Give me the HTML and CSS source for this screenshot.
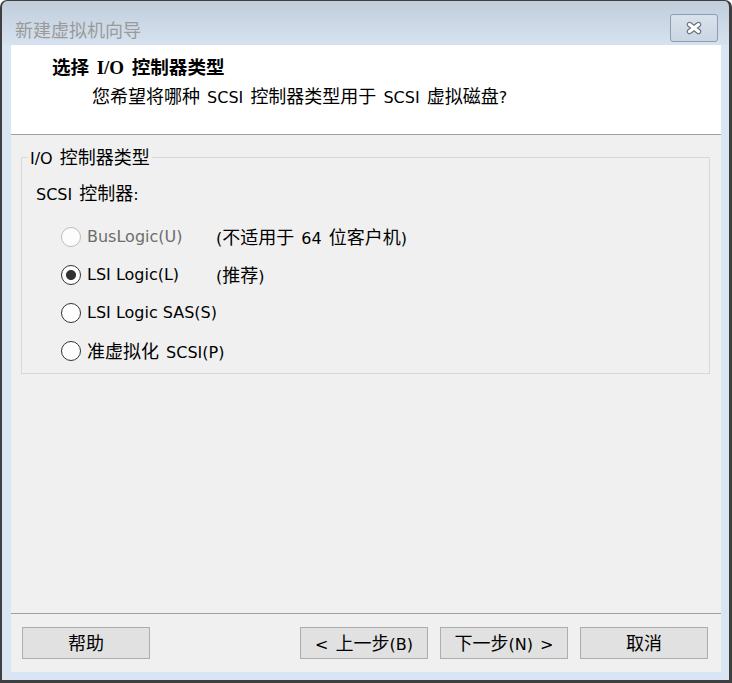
FILE: index.html
```html
<!DOCTYPE html>
<html lang="zh-CN">
<head>
<meta charset="utf-8">
<title>新建虚拟机向导</title>
<link rel="stylesheet" href="styles.css">
</head>
<body>
<div class="window">
  <div class="titlebar">
    <span class="window-title">新建虚拟机向导</span>
    <button class="close-btn" aria-label="关闭">
      <svg width="18" height="14" viewBox="0 0 18 14">
        <path d="M4.5 3.5 L13.5 10.5 M13.5 3.5 L4.5 10.5" stroke="#66717d" stroke-width="5.4" stroke-linecap="round" fill="none"/>
        <path d="M4.5 3.5 L13.5 10.5 M13.5 3.5 L4.5 10.5" stroke="#ffffff" stroke-width="3.2" stroke-linecap="round" fill="none"/>
      </svg>
    </button>
  </div>
  <div class="client">
    <header class="wizard-header">
      <h1 class="step-title"><span class="zh">选择</span> <span class="serif">I/O</span> <span class="zh">控制器类型</span></h1>
      <p class="step-desc"><span class="zh">您希望将哪种</span> SCSI <span class="zh">控制器类型用于</span> SCSI <span class="zh">虚拟磁盘</span>?</p>
    </header>
    <main class="wizard-body">
      <fieldset class="group">
        <legend class="group-legend">I/O <span class="zh">控制器类型</span></legend>
        <div class="group-inner">
          <div class="caption">SCSI <span class="zh">控制器</span>:</div>
          <div class="options">
            <label class="option disabled">
              <input type="radio" name="scsi" class="radio" disabled>
              <span class="opt-label latin">BusLogic(U)</span>
              <span class="opt-note">(<span class="zh">不适用于</span> 64 <span class="zh">位客户机</span>)</span>
            </label>
            <label class="option">
              <input type="radio" name="scsi" class="radio" checked>
              <span class="opt-label latin">LSI Logic(L)</span>
              <span class="opt-note">(<span class="zh">推荐</span>)</span>
            </label>
            <label class="option">
              <input type="radio" name="scsi" class="radio">
              <span class="opt-label latin">LSI Logic SAS(S)</span>
              <span class="opt-note"></span>
            </label>
            <label class="option">
              <input type="radio" name="scsi" class="radio">
              <span class="opt-label"><span class="zh">准虚拟化</span> SCSI(P)</span>
              <span class="opt-note"></span>
            </label>
          </div>
        </div>
      </fieldset>
    </main>
    <footer class="wizard-footer">
      <button class="btn"><span class="zh">帮助</span></button>
      <button class="btn btn-back">&lt; <span class="zh">上一步</span>(B)</button>
      <button class="btn"><span class="zh">下一步</span>(N) &gt;</button>
      <button class="btn"><span class="zh">取消</span></button>
    </footer>
  </div>
</div>
</body>
</html>
```

FILE: styles.css
```css
* {
  box-sizing: border-box;
}

html,
body {
  margin: 0;
  padding: 0;
}

body {
  width: 732px;
  height: 683px;
  overflow: hidden;
  background: #ffffff;
  color: #000000;
  font-family: "DejaVu Sans", "Noto Sans CJK SC", sans-serif;
  font-size: 16px;
  word-spacing: 2px;
}

.zh {
  font-family: "Noto Sans CJK SC", sans-serif;
  font-size: 18px;
}

.latin {
  word-spacing: 0;
}

.window {
  width: 732px;
  height: 683px;
  display: flex;
  flex-direction: column;
  border-style: solid;
  border-color: #3f3f3f;
  border-width: 1px 3px 3px 2px;
  border-radius: 7px 7px 0 0;
  padding: 0 8px 8px 9px;
  background: linear-gradient(#c1cddb 0, #d6e2ef 44px, #d9e5f2 44px, #d9e5f2 100%);
}

.titlebar {
  height: 44px;
  display: flex;
  align-items: center;
  justify-content: space-between;
  padding: 11px 3px 0 4px;
}

.window-title {
  font-family: "Noto Sans CJK SC", sans-serif;
  font-size: 18px;
  line-height: 24px;
  color: #9a9a9a;
  padding-top: 1px;
}

.close-btn {
  width: 48px;
  height: 28px;
  padding: 0;
  margin-top: -1px;
  border: 1px solid #8d9cb1;
  border-radius: 3px;
  background: linear-gradient(#d9e2ec, #cad6e3);
  display: flex;
  align-items: center;
  justify-content: center;
}

.client {
  flex: 1;
  display: flex;
  flex-direction: column;
  background: #f0f0f0;
}

.wizard-header {
  height: 90px;
  flex: none;
  background: #ffffff;
  border-bottom: 1px solid #a0a0a0;
  padding: 9px 0 0 41px;
}

.step-title {
  margin: 0;
  font-size: 18.6px;
  line-height: 24px;
  font-weight: 700;
  word-spacing: 1px;
}

.step-title .zh {
  font-size: 18.6px;
}

.serif {
  font-family: "Liberation Serif", serif;
  font-size: 19px;
}

.step-desc {
  margin: 3px 0 0 40px;
  line-height: 24px;
}

.wizard-body {
  flex: 1;
  padding-top: 11px;
}

.group {
  margin: 0 11px 0 10px;
  padding: 0 6px 3px;
  border: 1px solid #d9d9d9;
  min-width: 0;
}

.group-legend {
  padding: 0 2px;
  line-height: 20px;
}

.group-inner {
  padding-left: 8px;
}

.caption {
  margin-top: 13px;
  line-height: 20px;
}

.options {
  margin-top: 13px;
}

.option {
  display: grid;
  grid-template-columns: 20px 123px auto;
  column-gap: 6px;
  align-items: center;
  height: 38px;
  padding-left: 25px;
  line-height: 20px;
}

.radio {
  appearance: none;
  -webkit-appearance: none;
  margin: 0;
  width: 20px;
  height: 20px;
  border: 1px solid #333333;
  border-radius: 50%;
  background: #ffffff;
}

.radio:checked {
  background: radial-gradient(circle, #333333 0, #333333 4.6px, #ffffff 5.4px);
}

.radio:disabled {
  border-color: #bcbcbc;
  background: #fcfcfc;
}

.option.disabled .opt-label {
  color: #6d6d6d;
}

.opt-label,
.opt-note {
  white-space: nowrap;
}

.wizard-footer {
  flex: none;
  display: flex;
  gap: 12px;
  border-top: 1px solid #a0a0a0;
  padding: 13px 13px 13px 11px;
}

.btn {
  width: 128px;
  height: 32px;
  padding: 0;
  border: 1px solid #adadad;
  background: #e1e1e1;
  color: #000000;
  font-family: "DejaVu Sans", "Noto Sans CJK SC", sans-serif;
  font-size: 16px;
  line-height: 20px;
  word-spacing: 2px;
}

.btn-back {
  margin-left: auto;
}
```
